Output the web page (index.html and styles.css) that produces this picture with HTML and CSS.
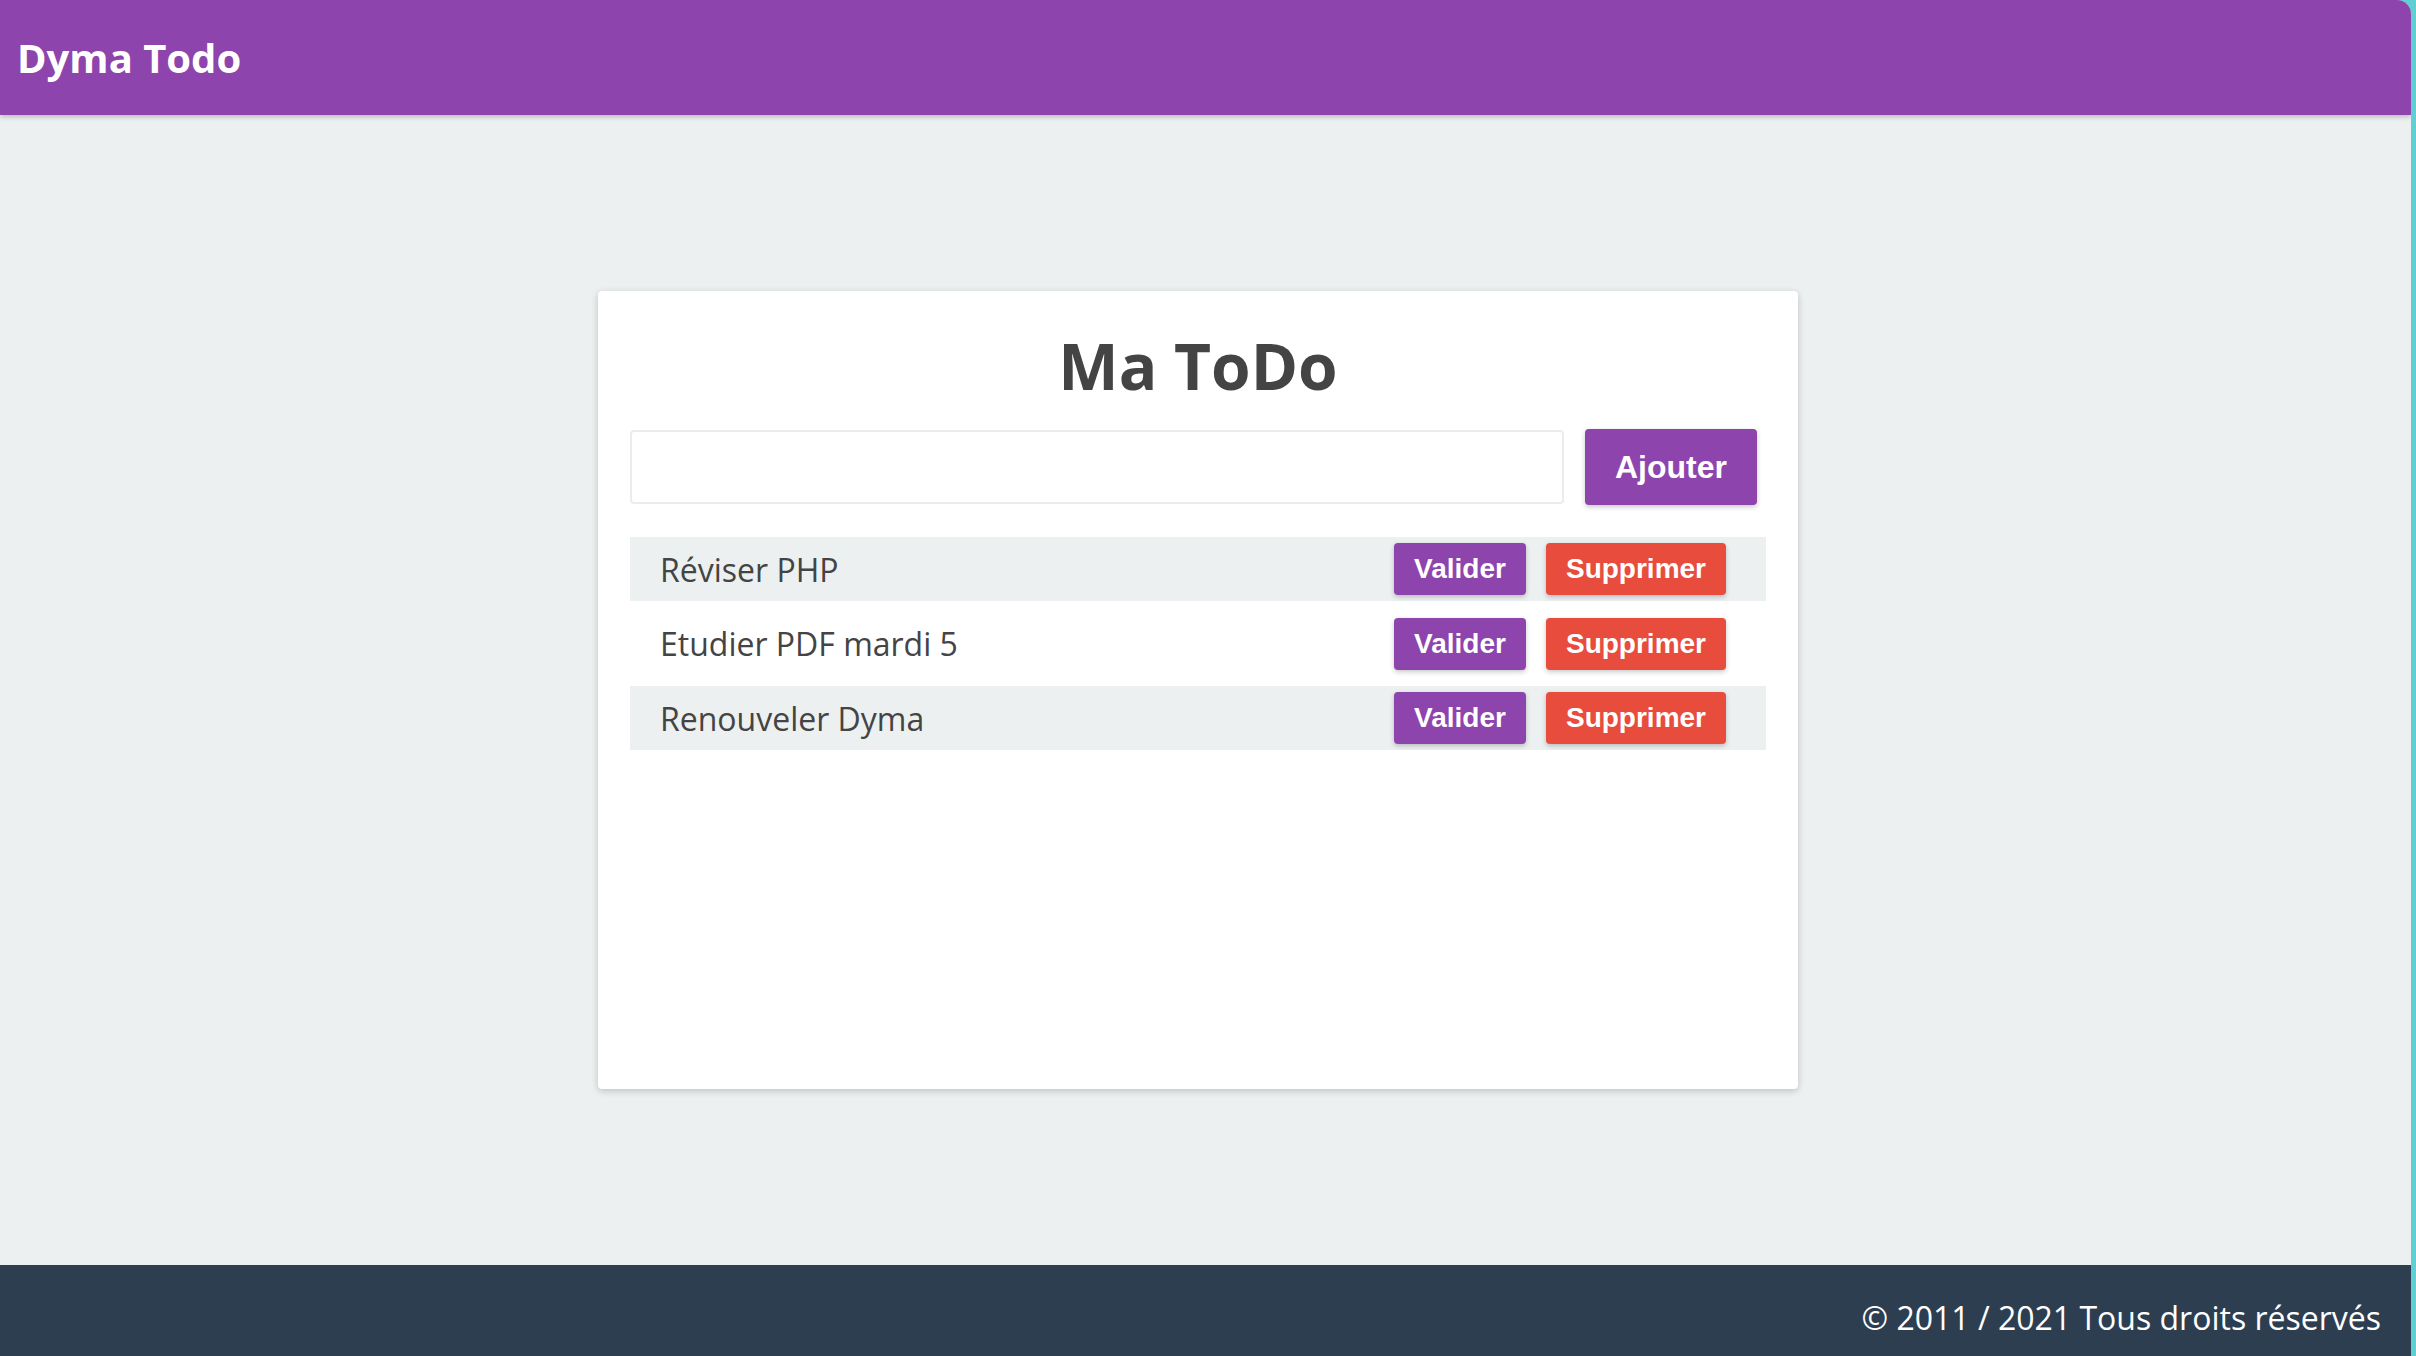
FILE: index.html
```html
<!DOCTYPE html>
<html lang="fr">
<head>
<meta charset="utf-8">
<title>Dyma Todo</title>
<link rel="stylesheet" href="styles.css">
</head>
<body>
<div class="app">
  <header class="topbar">
    <h1 class="brand">Dyma Todo</h1>
  </header>
  <main class="main">
    <section class="card">
      <h2 class="card-title">Ma ToDo</h2>
      <form class="add-form">
        <input class="add-input" type="text">
        <button class="btn btn-add" type="button">Ajouter</button>
      </form>
      <ul class="todo-list">
        <li class="todo">
          <span class="todo-text">Réviser PHP</span>
          <span class="todo-actions">
            <button class="btn btn-small btn-validate" type="button">Valider</button>
            <button class="btn btn-small btn-delete" type="button">Supprimer</button>
          </span>
        </li>
        <li class="todo">
          <span class="todo-text">Etudier PDF mardi 5</span>
          <span class="todo-actions">
            <button class="btn btn-small btn-validate" type="button">Valider</button>
            <button class="btn btn-small btn-delete" type="button">Supprimer</button>
          </span>
        </li>
        <li class="todo">
          <span class="todo-text">Renouveler Dyma</span>
          <span class="todo-actions">
            <button class="btn btn-small btn-validate" type="button">Valider</button>
            <button class="btn btn-small btn-delete" type="button">Supprimer</button>
          </span>
        </li>
      </ul>
    </section>
  </main>
  <footer class="footer">
    <p class="copyright">© 2011 / 2021 Tous droits réservés</p>
  </footer>
</div>
</body>
</html>
```

FILE: styles.css
```css
* {
  box-sizing: border-box;
}

html {
  background: #5fcfd3;
}

body {
  margin: 0;
  font-family: "Open Sans", "Noto Sans", sans-serif;
  color: #444444;
}

.app {
  width: calc(100% - 5px);
  min-height: 100vh;
  display: flex;
  flex-direction: column;
  background: #ecf0f1;
  border-top-right-radius: 14px;
  overflow: hidden;
}

.topbar {
  height: 115px;
  display: flex;
  align-items: center;
  padding: 0 17px;
  background: #8e44ad;
  box-shadow: 0 2px 5px rgba(0, 0, 0, 0.22);
  position: relative;
  z-index: 1;
}

.brand {
  margin: 0;
  font-size: 40px;
  font-weight: 700;
  color: #ffffff;
}

.main {
  flex: 1;
  display: flex;
  justify-content: center;
  align-items: center;
  padding-right: 15px;
}

.card {
  width: 1200px;
  height: 798px;
  padding: 31px 32px 32px;
  background: #ffffff;
  border-radius: 4px;
  box-shadow: 0 2px 7px rgba(0, 0, 0, 0.2);
}

.card-title {
  margin: 0 0 20px;
  text-align: center;
  font-size: 64px;
  font-weight: 700;
  color: #444444;
}

.add-form {
  display: flex;
  align-items: center;
  gap: 21px;
  padding-right: 9px;
  margin: 0 0 32px;
}

.add-input {
  flex: 1;
  height: 74px;
  border: 2px solid #ececec;
  border-radius: 4px;
  background: #ffffff;
  font-family: inherit;
  font-size: 28px;
  padding: 0 16px;
  outline: none;
}

.btn {
  border: 0;
  color: #ffffff;
  font-family: "Liberation Sans", Arial, sans-serif;
  font-weight: 700;
  border-radius: 4px;
  cursor: pointer;
  box-shadow: 0 2px 5px rgba(0, 0, 0, 0.22);
  display: inline-flex;
  align-items: center;
  justify-content: center;
}

.btn-add {
  width: 172px;
  height: 76px;
  font-size: 32px;
  background: #8e44ad;
}

.todo-list {
  list-style: none;
  margin: 0;
  padding: 0;
  display: flex;
  flex-direction: column;
  gap: 10.5px;
}

.todo {
  height: 64px;
  display: flex;
  align-items: center;
  justify-content: space-between;
  padding: 0 40px 0 30px;
}

.todo:nth-child(odd) {
  background: #ecf0f1;
}

.todo-text {
  font-size: 32px;
  color: #444444;
}

.todo-actions {
  display: flex;
  gap: 20px;
}

.btn-small {
  height: 52px;
  font-size: 28px;
}

.btn-validate {
  width: 132px;
  background: #8e44ad;
}

.btn-delete {
  width: 180px;
  background: #e74c3c;
}

.footer {
  height: 91px;
  background: #2c3e50;
  padding: 31px 30px 0;
}

.copyright {
  margin: 0;
  text-align: right;
  font-size: 32px;
  color: #ffffff;
}
```
